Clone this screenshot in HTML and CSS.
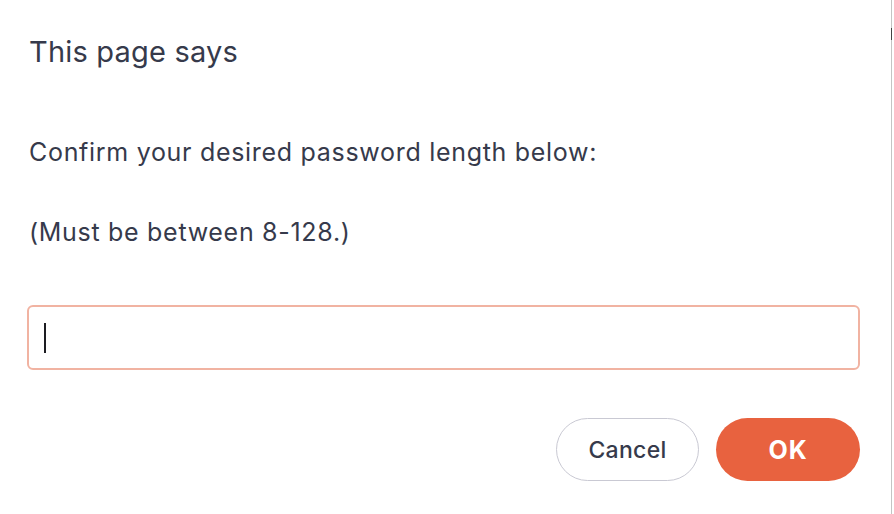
FILE: index.html
```html
<!DOCTYPE html>
<html>
<head>
<meta charset="utf-8">
<link rel="stylesheet" href="styles.css">
</head>
<body>
<div class="dialog">
  <h1 class="title">This page says</h1>
  <p class="msg">Confirm your desired password length below:</p>
  <p class="msg msg2">(Must be between 8-128.)</p>
  <div class="field"><span class="caret"></span></div>
  <div class="actions">
    <button class="btn cancel">Cancel</button>
    <button class="btn ok">OK</button>
  </div>
</div>
<div class="edge"><span class="mark"></span></div>
</body>
</html>
```
FILE: styles.css
```css
html, body { margin: 0; padding: 0; background: #fff; }
body {
  width: 894px; height: 514px; overflow: hidden;
  display: flex;
  font-family: Inter, "Noto Sans", sans-serif;
  color: #363a4b;
}
.dialog {
  flex: 1;
  padding: 0 31px 0 27px;
  display: flex; flex-direction: column;
}
.title {
  margin: 34px 0 0 2px;
  font-size: 29px; font-weight: 400; line-height: 36px;
  letter-spacing: 0.2px;
}
.msg {
  margin: 67px 0 0 2px;
  font-size: 25px; line-height: 30px;
  letter-spacing: 0.7px;
}
.msg2 { margin-top: 50px; }
.field {
  margin-top: 58px;
  height: 61px;
  border: 2px solid #f1b3a2;
  border-radius: 6px;
  display: flex; align-items: center;
  padding-left: 15px;
}
.caret { width: 2px; height: 30px; background: #1d1d22; }
.actions {
  margin-top: 48px;
  display: flex; justify-content: flex-end; gap: 17px;
}
.btn {
  width: 144px; height: 63px;
  border-radius: 32px;
  font-family: Inter, "Noto Sans", sans-serif;
  font-size: 23px;
  font-weight: 500;
  cursor: pointer;
}
.cancel {
  width: 143px;
  background: #fff;
  border: 1px solid #c9c9d3;
  color: #363a4b;
  letter-spacing: 0.3px;
}
.ok {
  background: #e8623f;
  border: none;
  color: #fff;
  font-size: 25px;
  font-weight: 700;
  letter-spacing: 0.8px;
}
.edge {
  width: 2px;
  border-left: 1px solid #c4c4c4;
  position: relative;
}
.mark {
  position: absolute; left: -1px; top: 28px;
  width: 1px; height: 12px; background: #444;
}
```
